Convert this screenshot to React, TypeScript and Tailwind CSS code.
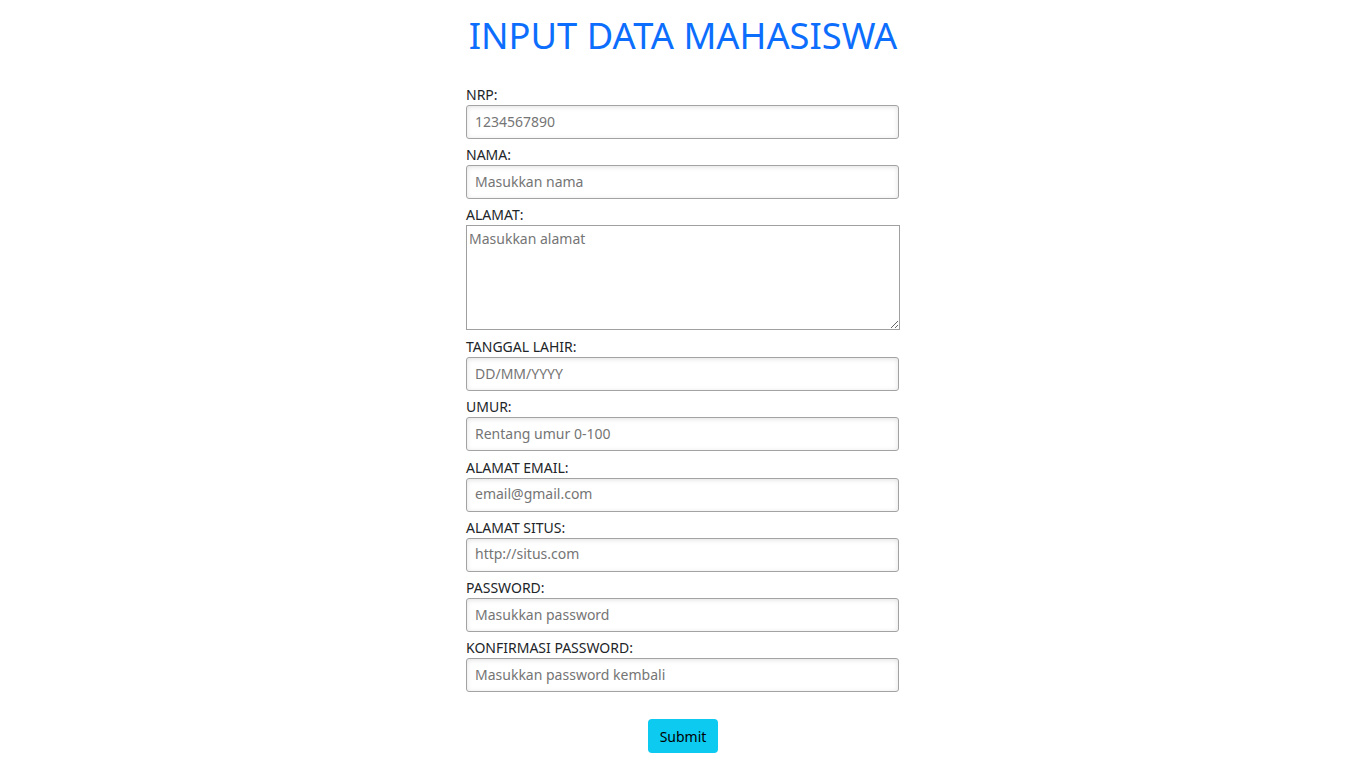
import React from "react";

const inputCls =
  "block w-[433px] h-[34px] border border-[#a3a3a3] rounded-[3px] bg-white pl-[8px] pr-[8px] pt-0 pb-[2px] text-[14px] text-[#212529] placeholder:text-[#757575] shadow-[inset_0_1px_5px_rgba(0,0,0,0.12)] outline-none";
const labelCls = "block h-[20px] text-[14px] leading-[20px] text-[#212529]";

function Field({ label, placeholder, gap }: { label: string; placeholder: string; gap: string }) {
  return (
    <div className={gap}>
      <label className={labelCls}>{label}</label>
      <input className={inputCls} placeholder={placeholder} />
    </div>
  );
}

export default function App() {
  return (
    <div
      className="min-h-[768px] w-full bg-white"
      style={{ fontFamily: '"Noto Sans", "Open Sans", sans-serif' }}
    >
      <div className="mx-auto w-[434px] pt-[14px]">
        <h1 className="text-center text-[36.3px] leading-[43px] text-[#0d6efd] font-normal whitespace-nowrap">
          INPUT DATA MAHASISWA
        </h1>
        <form className="mt-[28px]" onSubmit={(e) => e.preventDefault()}>
          <Field gap="" label="NRP:" placeholder="1234567890" />
          <Field gap="mt-[6px]" label="NAMA:" placeholder="Masukkan nama" />
          <div className="mt-[6px]">
            <label className={labelCls}>ALAMAT:</label>
            <textarea
              className="block w-[434px] h-[105px] border border-[#a0a0a0] bg-white px-[2px] pt-[3px] pb-[2px] text-[14px] leading-[20px] text-[#212529] placeholder:text-[#757575] outline-none"
              placeholder="Masukkan alamat"
            />
          </div>
          <Field gap="mt-[7px]" label="TANGGAL LAHIR:" placeholder="DD/MM/YYYY" />
          <Field gap="mt-[6.25px]" label="UMUR:" placeholder="Rentang umur 0-100" />
          <Field gap="mt-[6.25px]" label="ALAMAT EMAIL:" placeholder="email@gmail.com" />
          <Field gap="mt-[6.25px]" label="ALAMAT SITUS:" placeholder="http://situs.com" />
          <Field gap="mt-[6.25px]" label="PASSWORD:" placeholder="Masukkan password" />
          <Field gap="mt-[6.25px]" label="KONFIRMASI PASSWORD:" placeholder="Masukkan password kembali" />
          <div className="mt-[27px] flex justify-center">
            <button
              type="submit"
              className="w-[70px] h-[34px] rounded-[4px] bg-[#0dcaf0] text-[14px] text-black"
            >
              Submit
            </button>
          </div>
        </form>
      </div>
    </div>
  );
}
